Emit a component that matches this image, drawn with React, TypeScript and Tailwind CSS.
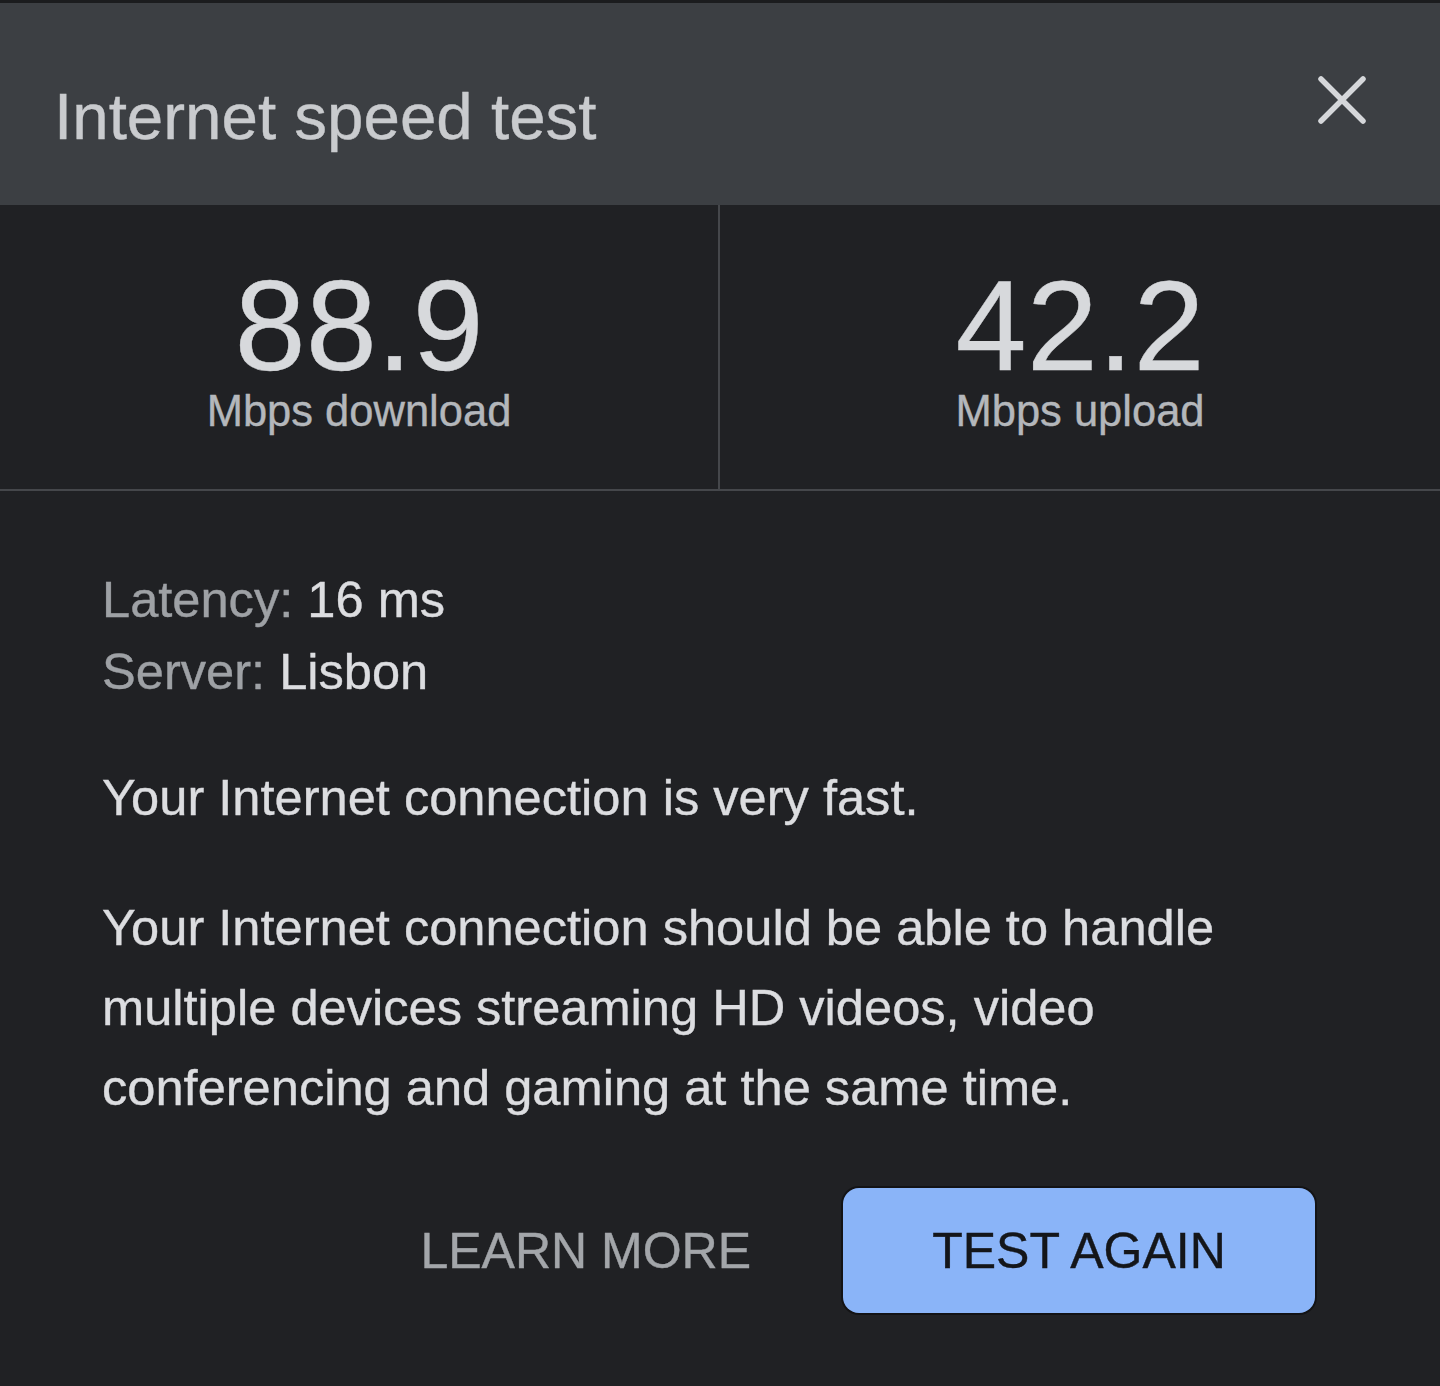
import { memo } from 'react'

const font = { fontFamily: '"Liberation Sans", Arial, Helvetica, sans-serif' }

const stats = [
  { value: '88.9', label: 'Mbps download' },
  { value: '42.2', label: 'Mbps upload' },
]

function CloseIcon() {
  return (
    <svg width="50" height="50" viewBox="0 0 50 50" className="mt-[72px]" aria-hidden>
      <path d="M4 4 L46 46 M46 4 L4 46" stroke="#d5d7da" strokeWidth="5.5" strokeLinecap="round" fill="none" />
    </svg>
  )
}

function SpeedTestComponent() {
  return (
    <div className="min-h-[1386px] w-full bg-[#202124] [-webkit-text-stroke:0.4px_currentcolor]" style={font}>
      {/* Header */}
      <div className="flex h-[205px] items-start justify-between border-t-[3px] border-[#1b1c1e] bg-[#3c3f43] pl-[54px] pr-[73px]">
        <h1 className="pt-[81px] text-[65.5px] leading-none text-[#c9cbce]">Internet speed test</h1>
        <button aria-label="Close">
          <CloseIcon />
        </button>
      </div>

      {/* Results */}
      <div className="grid h-[286px] grid-cols-2 border-b-2 border-[#45474b]">
        {stats.map((s, i) => (
          <div
            key={s.label}
            className={`flex flex-col items-center pt-[57px] ${i === 0 ? 'border-r-2 border-[#45474b]' : ''}`}
          >
            <div className="text-[128px] leading-none text-[#d7d9dc]">{s.value}</div>
            <div className="text-[43.5px] leading-none text-[#b4b7bb]">{s.label}</div>
          </div>
        ))}
      </div>

      {/* Details */}
      <div className="pl-[102px] pt-[73px]">
        <div className="text-[50.6px] leading-[72px]">
          <div>
            <span className="text-[#9ea1a5]">Latency: </span>
            <span className="text-[#dcdde0]">16 ms</span>
          </div>
          <div>
            <span className="text-[#9ea1a5]">Server: </span>
            <span className="text-[#dcdde0]">Lisbon</span>
          </div>
        </div>

        <p className="mt-[50px] text-[50.6px] leading-[80px] text-[#dcdde0]">
          Your Internet connection is very fast.
        </p>
        <p className="mt-[50px] max-w-[1200px] text-[50.6px] leading-[80px] text-[#dcdde0]">
          Your Internet connection should be able to handle multiple devices streaming HD videos, video
          conferencing and gaming at the same time.
        </p>
      </div>

      {/* Actions */}
      <div className="mt-[60px] flex items-center justify-end gap-[92px] pr-[125px]">
        <button className="text-[50px] leading-none text-[#a3a6aa]">LEARN MORE</button>
        <button className="flex h-[125px] w-[472px] items-center justify-center rounded-[16px] bg-[#8ab4f8] text-[50px] leading-none text-[#14161a] ring-2 ring-black/40">
          TEST AGAIN
        </button>
      </div>
    </div>
  )
}

export default memo(SpeedTestComponent)
